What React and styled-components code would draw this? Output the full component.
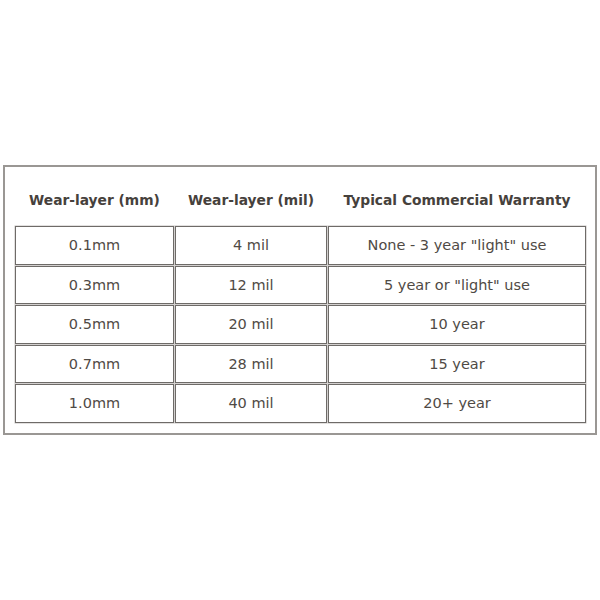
import React from 'react';
import styled, { createGlobalStyle } from 'styled-components';

const GlobalStyle = createGlobalStyle`
  html, body {
    margin: 0;
    padding: 0;
    background: #fff;
  }
  body {
    width: 600px;
    height: 600px;
    font-family: "DejaVu Sans", "Open Sans", sans-serif;
  }
`;

const Page = styled.div`
  width: 600px;
  height: 600px;
  padding-top: 165px;
  padding-left: 3px;
  box-sizing: border-box;
`;

const Frame = styled.div`
  width: 594px;
  box-sizing: border-box;
  border: 2px solid #9a9794;
  padding: 10px 8px 9px 9px;
`;

const Table = styled.table`
  border-collapse: separate;
  border-spacing: 1px;
  width: 573px;
  table-layout: fixed;
`;

const HeadCell = styled.th`
  height: 47px;
  padding: 0 0 3px;
  box-sizing: border-box;
  font-size: 13.8px;
  font-weight: 700;
  color: #46413c;
  text-align: center;
  vertical-align: middle;
  white-space: nowrap;
`;

const Cell = styled.td`
  height: 36.5px;
  padding: 0;
  border: 1px solid #6e6b68;
  box-shadow: 0 0 0 0.5px #c4c1be;
  font-size: 14.5px;
  color: #4f4a45;
  text-align: center;
  vertical-align: middle;
`;

const rows = [
  ['0.1mm', '4 mil', 'None - 3 year "light" use'],
  ['0.3mm', '12 mil', '5 year or "light" use'],
  ['0.5mm', '20 mil', '10 year'],
  ['0.7mm', '28 mil', '15 year'],
  ['1.0mm', '40 mil', '20+ year'],
];

const App = () => (
  <>
    <GlobalStyle />
    <Page>
      <Frame>
        <Table>
          <colgroup>
            <col style={{ width: 159 }} />
            <col style={{ width: 152 }} />
            <col style={{ width: 258 }} />
          </colgroup>
          <thead>
            <tr>
              <HeadCell>Wear-layer (mm)</HeadCell>
              <HeadCell>Wear-layer (mil)</HeadCell>
              <HeadCell>Typical Commercial Warranty</HeadCell>
            </tr>
          </thead>
          <tbody>
            {rows.map((r) => (
              <tr key={r[0]}>
                {r.map((c, i) => (
                  <Cell key={i}>{c}</Cell>
                ))}
              </tr>
            ))}
          </tbody>
        </Table>
      </Frame>
    </Page>
  </>
);

export default App;
